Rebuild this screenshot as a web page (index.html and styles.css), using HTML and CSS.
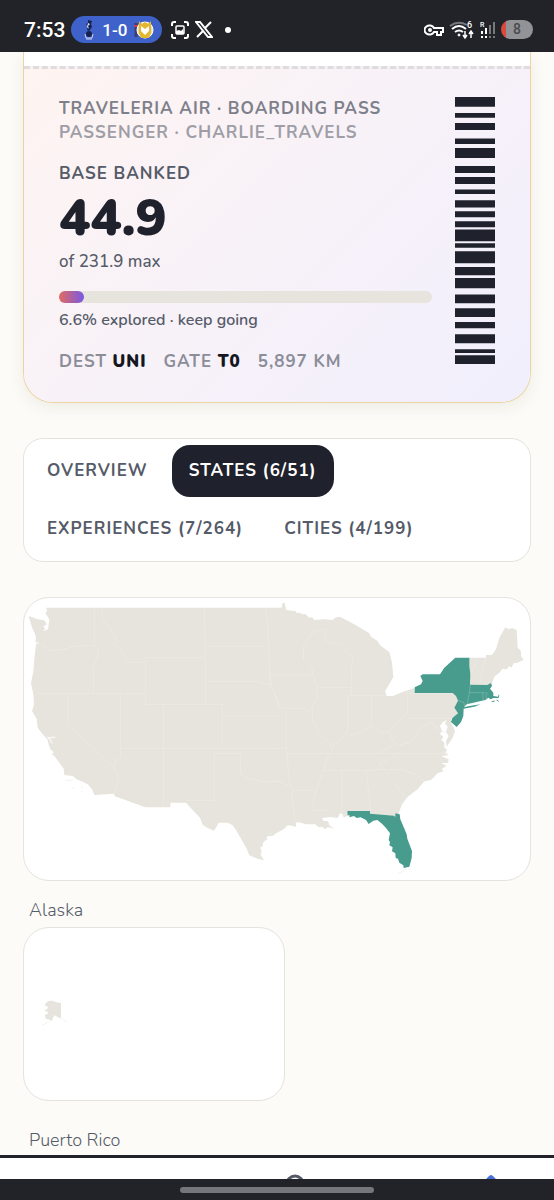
FILE: index.html
```html
<!DOCTYPE html>
<html lang="en">
<head>
  <meta charset="utf-8">
  <meta name="viewport" content="width=device-width, initial-scale=1">
  <title>Traveleria</title>
  <link rel="stylesheet" href="styles.css">
</head>
<body>
  <div class="screen">
    <header class="status-bar">
      <div class="status-group">
        <span class="clock">7:53</span>
        <span class="score-pill">
          <svg width="12" height="20" viewBox="0 0 12 20">
            <path d="M5 0l4 1-1 3 1 3-3 4-2-1 1-3-2-3 2-1z" fill="#17224f"/>
            <path d="M5 3l2 1-2 2 1 3-2-2z" fill="#dfe5f7"/>
            <circle cx="6" cy="14" r="3" fill="#17224f"/>
            <path d="M2 14l1 4h6l1-4M3 19h6" stroke="#c9d1e8" stroke-width="1" fill="none"/>
          </svg>
          <span>1-0</span>
          <svg width="20" height="18" viewBox="0 0 20 18">
            <path d="M2 2v14" stroke="#3b3f70" stroke-width="3"/>
            <path d="M0 5h4" stroke="#c9414b" stroke-width="2"/>
            <circle cx="11" cy="9" r="8" fill="#e9dfb6" stroke="#fff" stroke-width="1"/>
            <path d="M5 0l3 3 3-2 3 2 3-3v12l-2 5H7l-2-5z" fill="#e3b72f"/>
            <path d="M7 5l4 3 4-3v5l-4 4-4-4z" fill="#fff"/>
          </svg>
        </span>
        <svg class="capture" width="18" height="18" viewBox="0 0 18 18" fill="none" stroke="#fff" stroke-width="2">
          <path d="M1 5V3q0-2 2-2h2M13 1h2q2 0 2 2v2M17 13v2q0 2-2 2h-2M5 17H3q-2 0-2-2v-2"/>
          <path d="M6 5h6q1 0 1 1v6q0 1-1 1H6q-1 0-1-1V6q0-1 1-1z" stroke-width="1.500"/>
          <path d="M5 13v-3l3-1 2 1 2-2 1 5z" fill="#fff" stroke="none"/>
        </svg>
        <svg width="18" height="17" viewBox="0 0 18 17" fill="none" stroke="#fff">
          <path d="M1 1h4l12 15h-4z" stroke-width="2"/>
          <path d="M16 1l-6 6M8 10l-6 6" stroke-width="2"/>
        </svg>
        <svg class="dot" width="6" height="6" viewBox="0 0 6 6"><circle cx="3" cy="3" r="3" fill="#fff"/></svg>
      </div>
      <div class="status-group status-right">
        <svg width="20" height="12" viewBox="0 0 20 12" fill="none" stroke="#fff" stroke-width="2">
          <path d="M10 4h9v4h-2v3h-4V8h-3a5 4.500 0 1 1 0-4z"/>
          <circle cx="6" cy="6" r="1"/>
        </svg>
        <svg width="26" height="20" viewBox="0 0 26 20" fill="none" stroke="#fff" stroke-width="2">
          <path d="M1 6q8-6 17-1" stroke="#77787c"/>
          <path d="M3 9q7-6 14 0M6 12q4-3 8 0"/>
          <circle cx="10" cy="15" r="1" fill="#fff" stroke-width="1"/>
          <path d="M16 11v6M14 15l2 3 2-3M22 18v-6M20 14l2-3 2 3" stroke-width="1.500"/>
          <text x="18" y="8" class="tiny">6</text>
        </svg>
        <svg width="16" height="18" viewBox="0 0 16 18" fill="none" stroke-width="2">
          <text x="0" y="6" class="tinier">R</text>
          <path d="M2 10v3M2 15v2M6 7v6M6 15v2" stroke="#fff"/>
          <path d="M10 4v9M10 15v2M14 1v12M14 15v2" stroke="#77787c"/>
        </svg>
        <span class="battery">8</span>
      </div>
    </header>

    <main>
      <section class="pass">
        <div class="pass-tear"></div>
        <div class="pass-body">
          <div class="pass-info">
            <div class="label airline">Traveleria Air · Boarding Pass</div>
            <div class="label passenger">Passenger · Charlie_Travels</div>
            <div class="label banked">Base Banked</div>
            <div class="score">44.9</div>
            <div class="max">of 231.9 max</div>
            <div class="progress"><div class="progress-fill" style="width: 6.6%"></div></div>
            <div class="explored">6.6% explored · keep going</div>
            <div class="label trip">
              <span>Dest <b>UNI</b></span>
              <span>Gate <b>T0</b></span>
              <span>5,897 km</span>
            </div>
          </div>
          <svg class="barcode" viewBox="0 51 120 800" preserveAspectRatio="none">
            <path d="M0 51h120v29H0zM0 99h120v14H0zM0 129h120v21H0zM0 175h120v17H0zM0 204h120v30H0zM0 258h120v21H0zM0 291h120v21H0zM0 328h120v14H0zM0 360h120v22H0zM0 393h120v18H0zM0 423h120v18H0zM0 448h120v35H0zM0 489h120v14H0zM0 513h120v36H0zM0 560h120v25H0zM0 593h120v31H0zM0 643h120v26H0zM0 684h120v26H0zM0 725h120v19H0zM0 762h120v27H0zM0 807h120v11H0zM0 825h120v26H0z"/>
          </svg>
        </div>
      </section>

      <div class="tabs">
        <button class="tab">Overview</button>
        <button class="tab active">States (6/51)</button>
        <button class="tab">Experiences (7/264)</button>
        <button class="tab">Cities (4/199)</button>
      </div>

      <div class="map-card">
        <svg class="map" viewBox="14 26 1518 846">
          <!-- west -->
          <path class="land" d="M80 55H788L790 40L796 42L800 62L830 66V712L797 704L801 714L790 720L770 730L752 732L755 738L742 742L744 750L732 758L729 772L722 774L727 786L724 797L734 813L715 808L690 798L682 778L665 748L650 722L640 708L625 700L598 700L590 715L583 724L565 716L550 706L542 685L520 662L500 640H453V654H378L285 620V613L225 617L218 600L205 585L190 577L172 570L160 560L135 557L133 538L120 520L105 500L98 496L103 488L93 480L88 465L84 450L70 435L55 415L52 388L38 365L44 345L42 315L35 282L42 245L46 200L50 165L60 160L48 158L50 145L46 130L40 120L33 98L28 80L55 90L75 93L82 105L72 112L78 118L70 126L86 120L90 90L78 72L84 64Z"/>
          <path class="water" d="M86 446L108 443M90 446L98 462M84 442L92 450"/>
          <path class="island" d="M138 574L160 572M158 596L164 597M185 592L190 596M186 606L192 609"/>
          <path class="border" d="M50 163L72 166L84 183L130 180L165 172L205 168L225 168L235 176M225 55V168M235 176L236 198L222 232V312M50 312H380M250 55V90L275 120L290 148L285 165L305 182L322 215L330 220L378 218M378 204V346M378 204H558M555 55L558 204V346M378 346H610V478M303 312V505M148 312V408L285 535L298 562L285 615M303 505H290L285 535M303 478H800M432 346V654M560 172H745M560 277H710L745 285M738 55L745 100L748 170L753 290M610 380H785M745 285L765 305L780 370L797 400L802 478L806 576M586 478V634H500M586 493H663V555L690 568L735 578L806 576"/>
          <!-- east -->
          <g transform="translate(750 0)">
            <path class="land" d="M30 55H38L40 42L46 42L50 62L75 70L90 70L100 75L108 74L120 85L128 84L135 92L165 90L190 92L200 84L212 82L260 108L300 132L305 142L325 155L332 168L360 188L368 220L372 262L360 285L347 305L352 320L370 320L400 308L435 296V305H560L568 335L555 355L566 372L545 388L547 404L557 425L550 445L532 472L530 455L538 440L530 428L535 412L527 402L532 392L520 398L512 410L518 425L512 435L522 442L516 452L525 460L525 475L533 480L528 490L537 498L516 500L538 510L536 520L516 522L532 530L517 538L523 545L505 552L485 572L465 576L445 600L415 622L398 645L388 672L378 682L302 680L235 680L222 684L220 674L212 672L205 686L185 683L158 686L162 694L176 696L180 708L194 718L175 713L168 720L158 712L148 714L138 705L110 705L85 698L75 705L50 710L40 722L22 730L10 740H0L30 690Z"/>
            <path class="land" d="M598 205H650V197H668L680 180L690 145L708 114L718 120L728 116L742 122L745 175L755 185L755 200L763 212L740 222L734 220L726 235L720 230L712 240L700 238L690 250L675 262L665 290H598Z"/>
            <path class="border" d="M0 257H128M103 170L102 210L128 235L130 255L145 295H245M103 170L130 130L172 118L165 155L225 168L235 195L252 200L246 240V318M0 257L10 300L35 358H105L125 370M145 295L145 325L128 350L130 390L150 430L180 460L190 480L175 505L160 550L145 590L130 640L132 662H178M238 318V410L228 440L195 465L190 480M238 318H350M306 318V410L335 430L360 425L385 400L415 370V302M238 440L270 430L306 410M360 425L370 455L385 470L430 455L455 415L480 400L500 412L528 430M370 470L325 492M50 492H535M416 388H545M480 388L500 420M160 543H290L345 540L330 525L390 492M345 540L395 540L440 555L465 576M345 540L375 580L410 625M290 543L302 640V672M218 543V672M0 478H52V370M52 478L60 575L70 605V640L78 700M68 604H142M0 575L30 577L60 590M602 286L608 250L625 210V205M634 280L640 235L650 205M416 312H555"/>
            <path class="visited" d="M436 311V294L455 285L460 275L453 260L460 255H512L525 235L558 205H600V230L603 255L602 286L654 287L665 281L668 290L662 298L672 310V320L686 322L688 316L682 312L690 317L688 326L672 326L664 330L657 325L648 332L625 337L592 345L584 354L600 350L634 345L615 352L583 358L582 380L575 398L562 413L545 398L549 386L566 372L555 355L566 334L560 320L550 311Z"/>
            <path class="visited" d="M667 337L676 335M682 332L688 336" stroke="#489c8e" stroke-width="3"/>
            <path class="edge" d="M603 286L600 310L594 344M600 310H648L658 314M640 311L642 333M650 315L651 330M566 333L584 340L586 350"/>
            <path class="visited" d="M234 665H302V673L374 679L378 683L378 672L391 675L393 690L404 715L412 735L414 748L428 785L427 806L420 832L403 836L402 828L390 820L386 808L379 806L378 792L368 786L370 774L360 768L362 758L358 752L362 732L350 716L338 703L324 692L312 694L298 704L290 692L274 684L262 686L254 680L240 684L241 677L235 678Z"/>
            <path class="island" d="M385 853L400 846L408 842"/>
          </g>
        </svg>
      </div>

      <h2 class="map-title">Alaska</h2>
      <div class="inset-card">
        <svg class="map" viewBox="12 113 780 516">
          <path class="land" d="M76 340L84 332L98 331L108 336L123 338V384L112 380L104 375L100 380L96 392L88 388L78 386L74 374L84 370L82 364L72 360L82 356L84 350L74 345Z"/>
          <path class="island" d="M66 406L86 394M122 382L140 396"/>
        </svg>
      </div>
      <h2 class="map-title">Puerto Rico</h2>
    </main>

    <nav class="bottom-nav">
      <a href="#" aria-label="Search">
        <svg width="20" height="20" viewBox="0 0 20 20" fill="none" stroke="#555a66" stroke-width="3"><circle cx="10" cy="10" r="8"/></svg>
      </a>
      <a href="#" aria-label="Home">
        <svg width="20" height="20" viewBox="0 0 20 20" fill="#4a6fdc"><path d="M10 1q2 0 9 9v9H1v-9q7-9 9-9z"/></svg>
      </a>
    </nav>
    <footer class="gesture-bar"><div class="handle"></div></footer>
  </div>
</body>
</html>
```

FILE: styles.css
```css
* {
  box-sizing: border-box;
}
body {
  margin: 0;
  background: #fcfbf7;
  color: #555b68;
  font-family: Nunito, Lato, sans-serif;
  font-size: 17px;
  line-height: 24px;
}
.screen {
  height: 100vh;
  display: flex;
  flex-direction: column;
}
svg {
  display: block;
}

/* status bar */
.status-bar {
  flex: none;
  display: flex;
  justify-content: space-between;
  height: 52px;
  padding: 7px 21px 0 24px;
  background: #222329;
  color: #fff;
  font-family: Roboto, sans-serif;
  font-weight: 500;
}
.status-group {
  display: flex;
  align-items: center;
  gap: 6px;
}
.status-right {
  gap: 5px;
}
.clock {
  font-size: 21px;
}
.score-pill {
  display: flex;
  align-items: center;
  gap: 7px;
  height: 27px;
  padding: 0 8px 0 12px;
  border-radius: 14px;
  background: #3e62ca;
}
.capture {
  margin-left: 3px;
}
.dot {
  margin-left: 6px;
}
.tiny {
  font-size: 9px;
  fill: #fff;
  stroke: none;
}
.tinier {
  font-size: 7px;
  fill: #fff;
  stroke: none;
}
.battery {
  width: 32px;
  height: 19px;
  border-radius: 10px;
  background: linear-gradient(90deg, #db4a3e 5px, #929397 5px);
  color: #4a4b50;
  font-size: 14px;
  line-height: 19px;
  text-align: center;
}

main {
  flex: 1;
  min-height: 0;
  overflow: hidden;
  padding: 0 23px;
}

/* boarding pass */
.pass {
  border: 1px solid #ecd3a0;
  border-top: 0;
  border-radius: 0 0 30px 30px;
  background: #fff;
  box-shadow: 0 4px 16px rgba(60, 50, 30, 0.08);
}
.pass-tear {
  height: 14px;
}
.pass-body {
  display: flex;
  gap: 23px;
  padding: 28px 35px 28px;
  border-top: 3px dashed #dfdcdb;
  border-radius: 0 0 29px 29px;
  background: linear-gradient(135deg, #fef4f1, #f8f2f8 45%, #f1effd);
}
.pass-info {
  flex: 1;
}
.label {
  font-weight: 700;
  letter-spacing: 1px;
  text-transform: uppercase;
}
.airline {
  color: #7d808a;
}
.passenger {
  color: #9f9ea6;
}
.banked {
  margin-top: 17px;
}
.score {
  color: #1f222d;
  font-size: 52px;
  font-weight: 900;
  line-height: 64px;
}
.max {
  font-weight: 500;
}
.progress {
  height: 12px;
  margin: 17px 0 5px;
  border-radius: 6px;
  background: #e6e4dd;
}
.progress-fill {
  height: 100%;
  border-radius: 6px;
  background: linear-gradient(90deg, #e36a5f, #7659e6);
}
.explored {
  font-size: 16px;
  font-weight: 600;
}
.trip {
  display: flex;
  gap: 17px;
  margin-top: 18px;
  color: #8b8d98;
}
.trip b {
  color: #15171f;
  font-weight: 900;
}
.barcode {
  flex: none;
  width: 40px;
  height: 267px;
  fill: #1f222d;
}

/* tabs */
.tabs {
  display: flex;
  flex-wrap: wrap;
  gap: 6px 7px;
  margin: 35px 0;
  padding: 6px;
  border: 1px solid #e5e3de;
  border-radius: 20px;
  background: #fff;
}
.tab {
  height: 52px;
  padding: 0 17px;
  border: 0;
  border-radius: 18px;
  background: none;
  color: #555b68;
  font: inherit;
  font-weight: 700;
  letter-spacing: 1px;
  text-transform: uppercase;
  cursor: pointer;
}
.tab.active {
  background: #1f222d;
  color: #fff;
}

/* maps */
.map-card,
.inset-card {
  overflow: hidden;
  border: 1px solid #e5e3de;
  border-radius: 26px;
  background: #fff;
}
.inset-card {
  width: 262px;
  margin-bottom: 27px;
}
.map {
  width: 100%;
}
.map-title {
  margin: 17px 6px 5px;
  font-size: 18px;
  font-weight: 300;
  line-height: 24px;
}
.land {
  fill: #e6e4dd;
}
.border,
.edge,
.water,
.island {
  fill: none;
  stroke: #edebe6;
  stroke-width: 2;
  stroke-linejoin: round;
}
.water {
  stroke: #fff;
  stroke-width: 3;
}
.edge {
  stroke: #7eb9ae;
}
.visited {
  fill: #489c8e;
}

/* bottom */
.bottom-nav {
  flex: none;
  display: flex;
  justify-content: space-between;
  height: 24px;
  padding: 16px 53px 0 285px;
  overflow: hidden;
  border-top: 3px solid #222329;
  background: #fff;
}
.gesture-bar {
  flex: none;
  display: flex;
  justify-content: center;
  height: 21px;
  padding-top: 8px;
  background: #222329;
}
.handle {
  width: 35%;
  height: 6px;
  border-radius: 3px;
  background: #75767b;
}
```
